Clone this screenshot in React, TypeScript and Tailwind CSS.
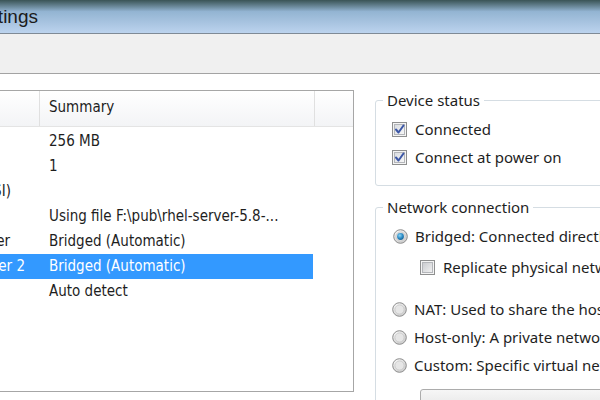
import React from "react";

const CheckBox = ({ checked }: { checked: boolean }) => (
  <svg width="15" height="15" viewBox="0 0 15 15" className="shrink-0">
    <defs>
      <linearGradient id={checked ? "cbg1" : "cbg0"} x1="0" y1="0" x2="1" y2="1">
        <stop offset="0" stopColor={checked ? "#d8dbe0" : "#c9cbcf"} />
        <stop offset="1" stopColor={checked ? "#f8f8f8" : "#f2f2f2"} />
      </linearGradient>
    </defs>
    <rect x="0.5" y="0.5" width="14" height="14" fill="#f4f4f4" stroke="#8e8f8f" />
    <rect x="2.5" y="2.5" width="10" height="10" fill={`url(#${checked ? "cbg1" : "cbg0"})`} stroke="#b4b6ba" />
    {checked && (
      <path d="M4 7.5 L6.5 10.5 L11.5 3.5" fill="none" stroke="#3c57a6" strokeWidth="2" strokeLinecap="round" strokeLinejoin="round" />
    )}
  </svg>
);

const Radio = ({ checked }: { checked: boolean }) => (
  <svg width="15" height="15" viewBox="0 0 15 15" className="shrink-0">
    <defs>
      <radialGradient id="rbg" cx="0.35" cy="0.3" r="0.8">
        <stop offset="0" stopColor="#ffffff" />
        <stop offset="1" stopColor="#c8c8c8" />
      </radialGradient>
      <radialGradient id="rdot" cx="0.4" cy="0.35" r="0.7">
        <stop offset="0" stopColor="#8fd6f6" />
        <stop offset="0.6" stopColor="#2a8ac4" />
        <stop offset="1" stopColor="#175e8e" />
      </radialGradient>
    </defs>
    <circle cx="7.5" cy="7.5" r="6.8" fill="url(#rbg)" stroke="#8d8d8d" strokeWidth="1" />
    <circle cx="7.5" cy="7.5" r="4.6" fill="#e6e6e6" stroke="#c4c4c4" strokeWidth="0.8" />
    {checked && <circle cx="7.5" cy="7.5" r="3.4" fill="url(#rdot)" />}
  </svg>
);

const rows = [
  { dev: "Memory", sum: "256 MB", off: "ml-[-104px]" },
  { dev: "Processors", sum: "1", off: "ml-[-104px]" },
  { dev: "Hard Disk (SCSI)", sum: "", off: "ml-[-100px]" },
  { dev: "CD/DVD (IDE)", sum: "Using file F:\\pub\\rhel-server-5.8-...", off: "ml-[-104px]" },
  { dev: "Network Adapter", sum: "Bridged (Automatic)", off: "ml-[-104px]" },
  { dev: "Network Adapter 2", sum: "Bridged (Automatic)", sel: true, off: "ml-[-102px]" },
  { dev: "Sound Card", sum: "Auto detect", off: "ml-[-104px]" },
];

export default function App() {
  return (
    <div className="w-[600px] h-[400px] overflow-hidden bg-white flex flex-col text-[#1e1e1e]" style={{ fontFamily: "'Noto Sans', 'Open Sans', sans-serif" }}>
      {/* title bar */}
      <div className="h-[33px] shrink-0 flex items-center bg-linear-to-b from-[#3a5456] from-0% via-[#93b4d2] via-35% to-[#bcd3ee] to-100%">
        <div className="w-[38px] overflow-hidden flex justify-end">
          <span className="whitespace-nowrap text-[19px] leading-none text-[#1b1b1b] pb-[1px]" style={{ fontFamily: "'Liberation Sans', Arial, sans-serif" }}>Virtual Machine Settings</span>
        </div>
      </div>
      {/* toolbar strip */}
      <div className="h-[41px] shrink-0 bg-[#f0f0f0] border-t border-b border-t-[#7f8a96] border-b-[#a3a3a3]" />
      {/* body */}
      <div className="flex pt-[16px] flex-1 min-h-0">
        {/* device list */}
        <div className="w-[354px] h-[302px] shrink-0 border-t border-r border-b border-[#a6a6a6] flex flex-col" style={{ fontFamily: "'DejaVu Sans Condensed', 'DejaVu Sans', sans-serif" }}>
          <div className="h-[36px] flex border-b border-[#e4e4e4] bg-[linear-gradient(to_bottom,#ffffff,#f3f4f6)] text-[15px]">
            <div className="w-[40px] border-r border-[#e0e0e0]" />
            <div className="w-[275px] border-r border-[#e0e0e0] flex items-center pl-[9px] pb-[2px]">Summary</div>
            <div className="flex-1" />
          </div>
          <div className="pt-[2px] flex flex-col text-[15px]">
            {rows.map((r, i) => (
              <div key={i} className={`w-[313px] h-[25px] flex items-center ${r.sel ? "bg-[#3399ff] text-white" : ""}`}>
                <div className="w-[40px] overflow-hidden">
                  <div className={`${r.off} whitespace-nowrap`}>{r.dev}</div>
                </div>
                <div className="pl-[9px] whitespace-nowrap">{r.sum}</div>
              </div>
            ))}
          </div>
        </div>
        {/* right panel */}
        <div className="ml-[21px] flex flex-col text-[15px]">
          <fieldset className="w-[260px] border border-[#d5dde3] rounded-[3px] pb-[14px]">
            <legend className="ml-[7px] px-[4px] leading-[20px]">Device status</legend>
            <div className="h-[28px] flex items-center gap-[8px] mt-[5px] ml-[16px]">
              <CheckBox checked />
              <span>Connected</span>
            </div>
            <div className="h-[28px] flex items-center gap-[8px] ml-[16px]">
              <CheckBox checked />
              <span>Connect at power on</span>
            </div>
          </fieldset>
          <fieldset className="w-[260px] h-[260px] border border-[#d5dde3] rounded-[3px] mt-[11px]">
            <legend className="ml-[7px] px-[4px] leading-[20px]">Network connection</legend>
            <div className="h-[28px] flex items-center gap-[7px] mt-[5px] ml-[17px] whitespace-nowrap">
              <Radio checked />
              <span>Bridged: Connected directly to the physical network</span>
            </div>
            <div className="h-[28px] flex items-center gap-[8px] mt-[3px] ml-[44px] whitespace-nowrap">
              <CheckBox checked={false} />
              <span>Replicate physical network connection state</span>
            </div>
            <div className="h-[28px] flex items-center gap-[7px] mt-[14px] ml-[16px] whitespace-nowrap">
              <Radio checked={false} />
              <span>NAT: Used to share the host's IP address</span>
            </div>
            <div className="h-[28px] flex items-center gap-[7px] ml-[16px] whitespace-nowrap">
              <Radio checked={false} />
              <span>Host-only: A private network shared with the host</span>
            </div>
            <div className="h-[28px] flex items-center gap-[7px] ml-[16px] whitespace-nowrap">
              <Radio checked={false} />
              <span>Custom: Specific virtual network</span>
            </div>
            <div className="ml-[44px] mt-[10px] h-[24px] w-[220px] border border-[#acacac] rounded-[3px] bg-[linear-gradient(to_bottom,#f6f6f6,#e3e3e3)]" />
          </fieldset>
        </div>
      </div>
    </div>
  );
}
